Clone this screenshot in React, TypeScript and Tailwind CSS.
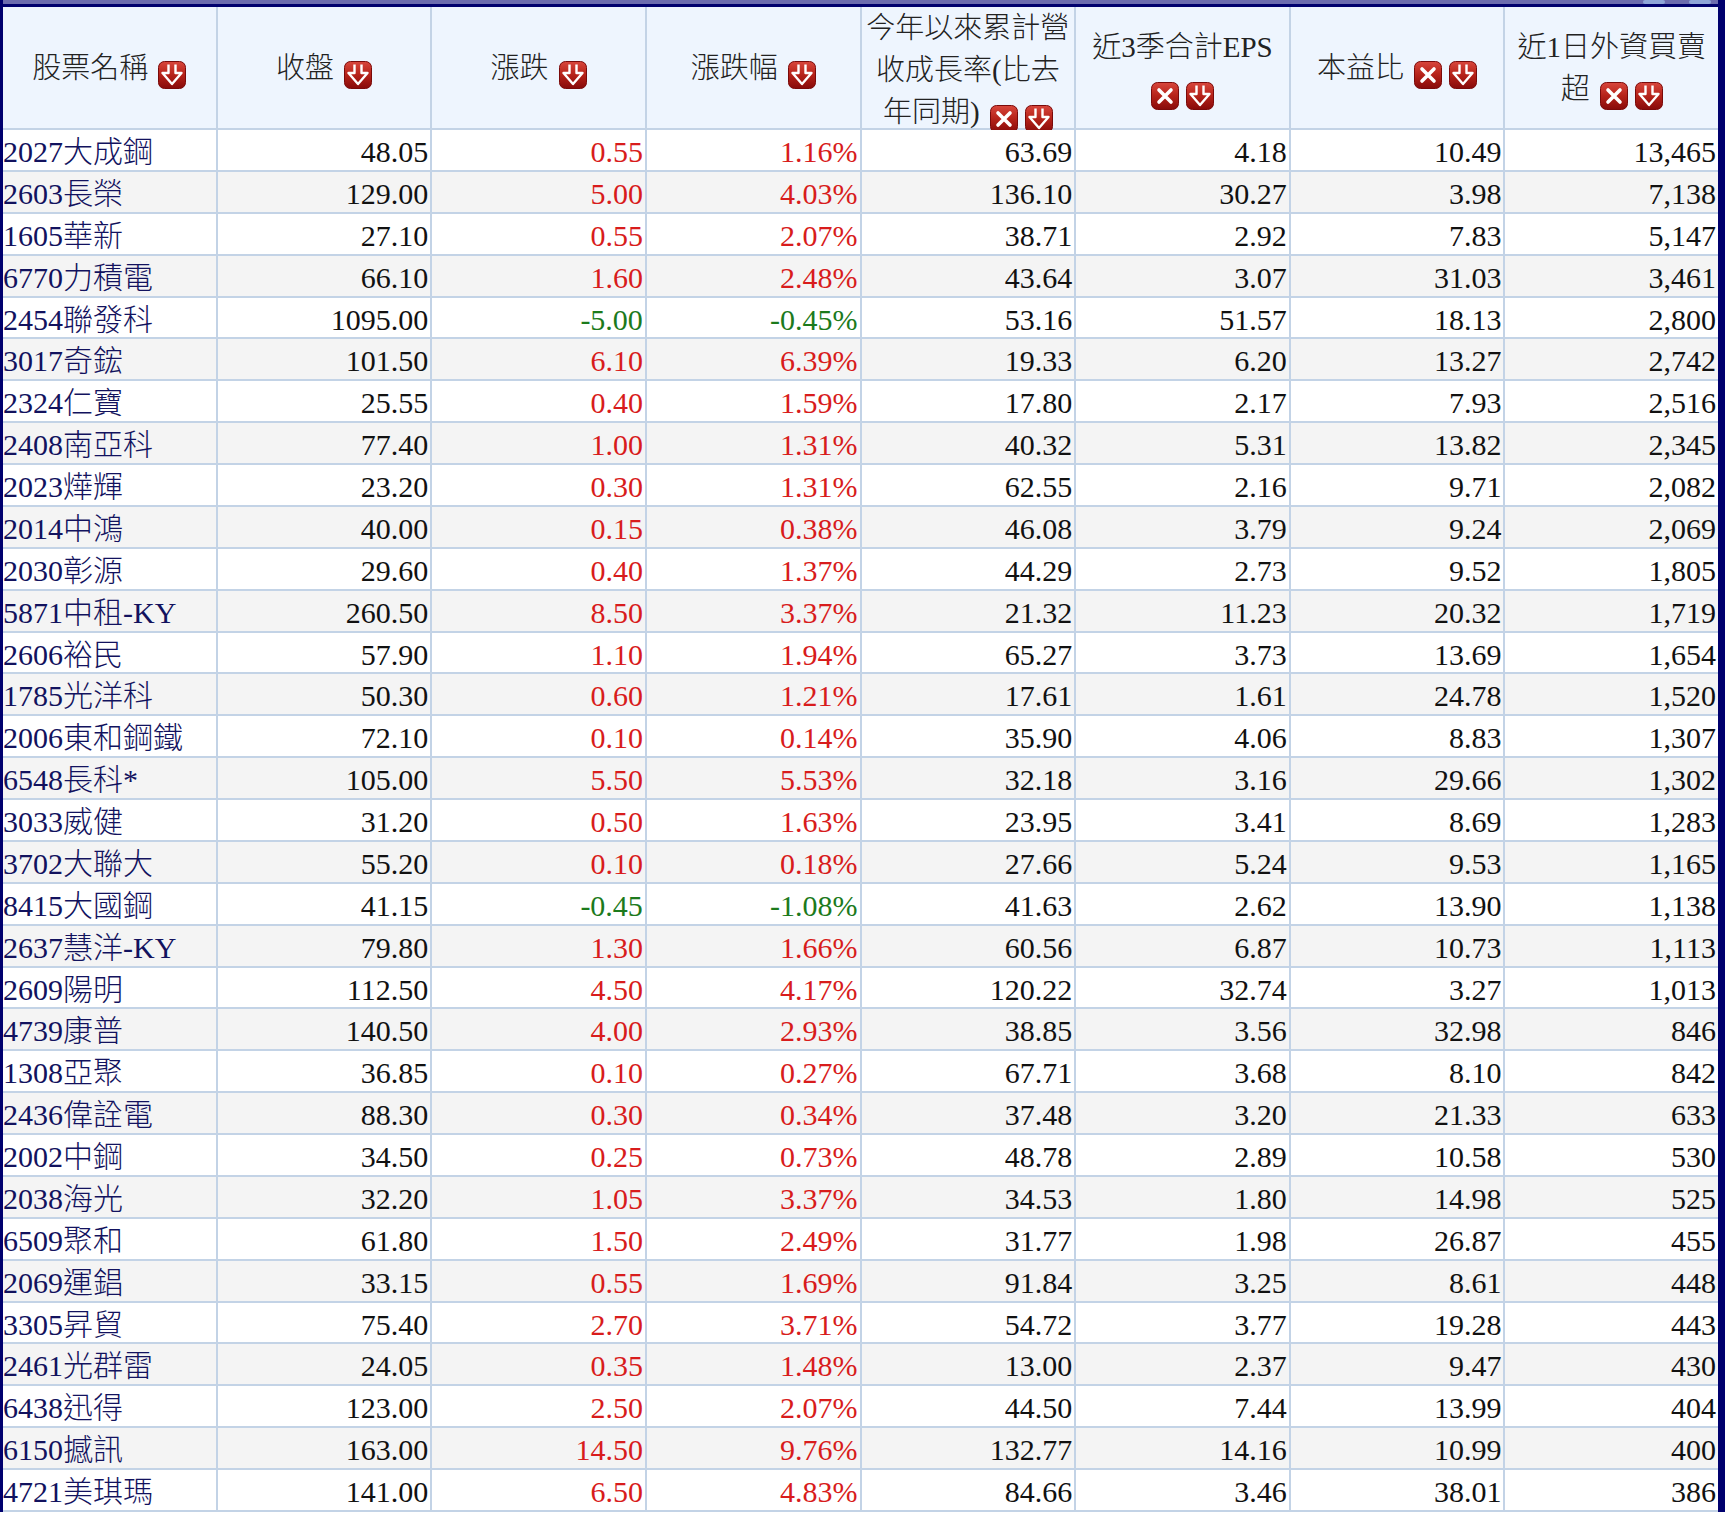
import { useId } from "react";

type Row = [string, string, string, string, string, string, string, string];

const rows: Row[] = [
  ["2027大成鋼", "48.05", "0.55", "1.16%", "63.69", "4.18", "10.49", "13,465"],
  ["2603長榮", "129.00", "5.00", "4.03%", "136.10", "30.27", "3.98", "7,138"],
  ["1605華新", "27.10", "0.55", "2.07%", "38.71", "2.92", "7.83", "5,147"],
  ["6770力積電", "66.10", "1.60", "2.48%", "43.64", "3.07", "31.03", "3,461"],
  ["2454聯發科", "1095.00", "-5.00", "-0.45%", "53.16", "51.57", "18.13", "2,800"],
  ["3017奇鋐", "101.50", "6.10", "6.39%", "19.33", "6.20", "13.27", "2,742"],
  ["2324仁寶", "25.55", "0.40", "1.59%", "17.80", "2.17", "7.93", "2,516"],
  ["2408南亞科", "77.40", "1.00", "1.31%", "40.32", "5.31", "13.82", "2,345"],
  ["2023燁輝", "23.20", "0.30", "1.31%", "62.55", "2.16", "9.71", "2,082"],
  ["2014中鴻", "40.00", "0.15", "0.38%", "46.08", "3.79", "9.24", "2,069"],
  ["2030彰源", "29.60", "0.40", "1.37%", "44.29", "2.73", "9.52", "1,805"],
  ["5871中租-KY", "260.50", "8.50", "3.37%", "21.32", "11.23", "20.32", "1,719"],
  ["2606裕民", "57.90", "1.10", "1.94%", "65.27", "3.73", "13.69", "1,654"],
  ["1785光洋科", "50.30", "0.60", "1.21%", "17.61", "1.61", "24.78", "1,520"],
  ["2006東和鋼鐵", "72.10", "0.10", "0.14%", "35.90", "4.06", "8.83", "1,307"],
  ["6548長科*", "105.00", "5.50", "5.53%", "32.18", "3.16", "29.66", "1,302"],
  ["3033威健", "31.20", "0.50", "1.63%", "23.95", "3.41", "8.69", "1,283"],
  ["3702大聯大", "55.20", "0.10", "0.18%", "27.66", "5.24", "9.53", "1,165"],
  ["8415大國鋼", "41.15", "-0.45", "-1.08%", "41.63", "2.62", "13.90", "1,138"],
  ["2637慧洋-KY", "79.80", "1.30", "1.66%", "60.56", "6.87", "10.73", "1,113"],
  ["2609陽明", "112.50", "4.50", "4.17%", "120.22", "32.74", "3.27", "1,013"],
  ["4739康普", "140.50", "4.00", "2.93%", "38.85", "3.56", "32.98", "846"],
  ["1308亞聚", "36.85", "0.10", "0.27%", "67.71", "3.68", "8.10", "842"],
  ["2436偉詮電", "88.30", "0.30", "0.34%", "37.48", "3.20", "21.33", "633"],
  ["2002中鋼", "34.50", "0.25", "0.73%", "48.78", "2.89", "10.58", "530"],
  ["2038海光", "32.20", "1.05", "3.37%", "34.53", "1.80", "14.98", "525"],
  ["6509聚和", "61.80", "1.50", "2.49%", "31.77", "1.98", "26.87", "455"],
  ["2069運錩", "33.15", "0.55", "1.69%", "91.84", "3.25", "8.61", "448"],
  ["3305昇貿", "75.40", "2.70", "3.71%", "54.72", "3.77", "19.28", "443"],
  ["2461光群雷", "24.05", "0.35", "1.48%", "13.00", "2.37", "9.47", "430"],
  ["6438迅得", "123.00", "2.50", "2.07%", "44.50", "7.44", "13.99", "404"],
  ["6150撼訊", "163.00", "14.50", "9.76%", "132.77", "14.16", "10.99", "400"],
  ["4721美琪瑪", "141.00", "6.50", "4.83%", "84.66", "3.46", "38.01", "386"],
];

function IconBox({ children }: { children: React.ReactNode }) {
  const id = useId();
  return (
    <svg width="28" height="28" viewBox="0 0 28 28" className="inline-block align-[-11px]">
      <defs>
        <linearGradient id={id} x1="0" y1="0" x2="0" y2="1">
          <stop offset="0" stopColor="#d8463c" />
          <stop offset="0.5" stopColor="#b52219" />
          <stop offset="1" stopColor="#870a0a" />
        </linearGradient>
      </defs>
      <rect x="0.5" y="0.5" width="27" height="27" rx="6" fill={`url(#${id})`} stroke="#7a0a0a" strokeWidth="1" />
      {children}
    </svg>
  );
}

function SortIcon() {
  return (
    <IconBox>
      <path
        d="M10.5 3.5V12H4.5L14 23L23.5 12H17.5V3.5"
        fill="none"
        stroke="#fff"
        strokeWidth="2.4"
        strokeLinejoin="round"
      />
    </IconBox>
  );
}

function RemoveIcon() {
  return (
    <IconBox>
      <path d="M8 8L20 20M20 8L8 20" fill="none" stroke="#fff" strokeWidth="3.6" strokeLinecap="round" />
    </IconBox>
  );
}

function Icons({ remove }: { remove?: boolean }) {
  return (
    <span className="inline-flex gap-[7px] ml-[10px] align-[-11px]">
      {remove && <RemoveIcon />}
      <SortIcon />
    </span>
  );
}

function HeadCell({ children, top }: { children: React.ReactNode; top?: boolean }) {
  return (
    <div
      className={`h-[121px] bg-[#eef5fe] flex flex-col items-center text-center text-[29px] leading-[42px] text-[#222] whitespace-nowrap ${
        top ? "justify-start" : "justify-center"
      }`}
    >
      {children}
    </div>
  );
}

export default function App() {
  return (
    <div
      className="w-[1730px] bg-white font-light"
      style={{ fontFamily: '"Liberation Serif", "Noto Sans CJK TC", serif' }}
    >
      <div className="w-[1725px] border-l-[3px] border-r-[7px] border-[#00006e] bg-[#00006e]">
        <div className="relative h-[4px] bg-[#6c6cae] overflow-hidden">
          <span className="absolute left-[1640px] top-0 w-[22px] h-[4px] rounded-full bg-[#8fa6d8]" />
          <span className="absolute left-[1686px] top-0 w-[22px] h-[4px] rounded-full bg-[#8fa6d8]" />
        </div>
        <div className="h-[3px] bg-[#00006e]" />
        <div className="grid grid-cols-8 gap-[2px] pb-[2px] bg-[#c3d3e6]">
          <HeadCell>
            <div>
              股票名稱
              <Icons />
            </div>
          </HeadCell>
          <HeadCell>
            <div>
              收盤
              <Icons />
            </div>
          </HeadCell>
          <HeadCell>
            <div>
              漲跌
              <Icons />
            </div>
          </HeadCell>
          <HeadCell>
            <div>
              漲跌幅
              <Icons />
            </div>
          </HeadCell>
          <HeadCell top>
            <div>今年以來累計營</div>
            <div>收成長率(比去</div>
            <div>
              年同期)
              <Icons remove />
            </div>
          </HeadCell>
          <HeadCell>
            <div>近3季合計EPS</div>
            <div>
              <span className="inline-flex gap-[7px] align-[-11px]">
                <RemoveIcon />
                <SortIcon />
              </span>
            </div>
          </HeadCell>
          <HeadCell>
            <div>
              本益比
              <Icons remove />
            </div>
          </HeadCell>
          <HeadCell>
            <div>近1日外資買賣</div>
            <div>
              超
              <Icons remove />
            </div>
          </HeadCell>

          {rows.map((r, i) => {
            const bg = i % 2 === 0 ? "bg-white" : "bg-[#f4f4f4]";
            const neg = r[2].startsWith("-");
            const chg = neg ? "text-[#1c7a1c]" : "text-[#d81c1c]";
            return [
              <div
                key={`${i}-n`}
                className={`${bg} h-[39.88px] pt-[4px] leading-[36px] text-[30px] text-[#12125e] whitespace-nowrap overflow-hidden`}
              >
                {r[0]}
              </div>,
              ...r.slice(1).map((v, j) => (
                <div
                  key={`${i}-${j}`}
                  className={`${bg} h-[39.88px] pt-[4px] pr-[2px] leading-[36px] text-[30px] text-right whitespace-nowrap overflow-hidden ${
                    j === 1 || j === 2 ? chg : "text-[#111]"
                  }`}
                >
                  {v}
                </div>
              )),
            ];
          })}
        </div>
      </div>
    </div>
  );
}
